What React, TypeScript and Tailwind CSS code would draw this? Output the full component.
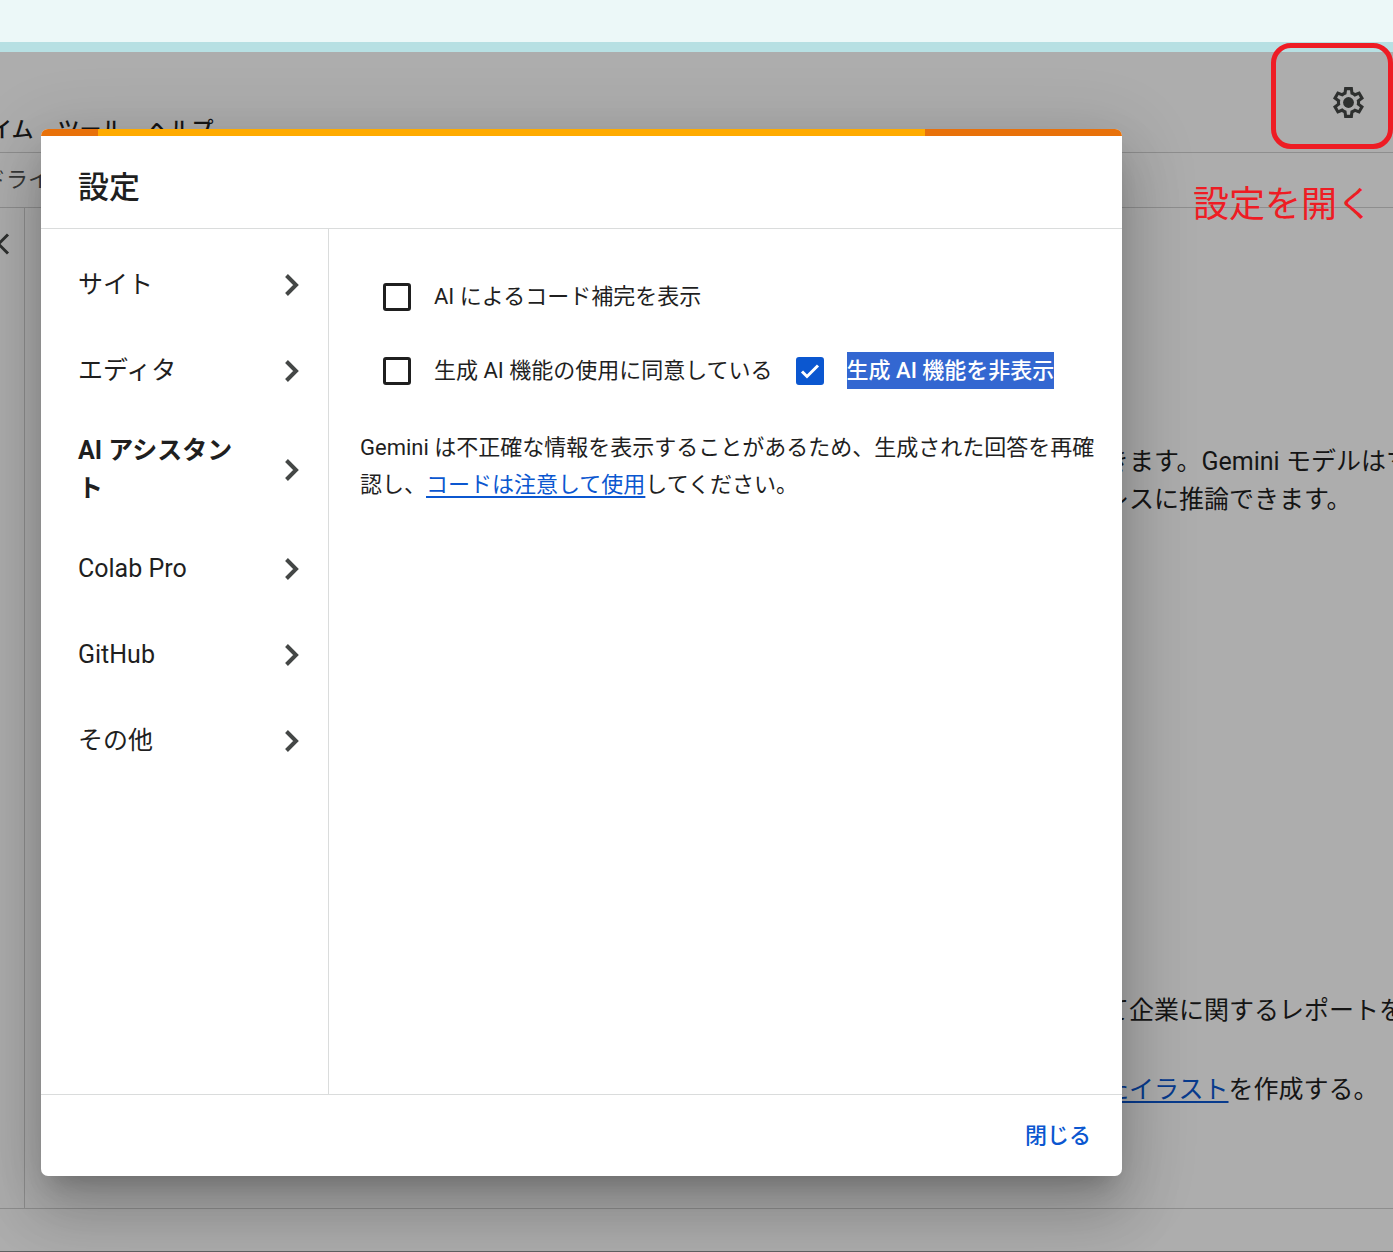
import { useState } from "react";

const navItems = ["サイト", "エディタ", "AI アシスタント", "Colab Pro", "GitHub", "その他"];

function GearIcon() {
  return (
    <svg viewBox="0 0 24 24" className="size-[37px] fill-[#2e302f]" aria-hidden="true">
      <path
        fillRule="evenodd"
        d="m9.25 22-.4-3.2q-.325-.125-.612-.3-.288-.175-.563-.375L4.7 19.375l-2.75-4.75 2.575-1.95Q4.5 12.5 4.5 12.338v-.675q0-.163.025-.338L1.95 9.375l2.75-4.75 2.975 1.25q.275-.2.575-.375.3-.175.6-.3l.4-3.2h5.5l.4 3.2q.325.125.613.3.287.175.562.375l2.975-1.25 2.75 4.75-2.575 1.95q.025.175.025.338v.674q0 .163-.05.338l2.575 1.95-2.75 4.75-2.95-1.25q-.275.2-.575.375-.3.175-.6.3l-.4 3.2ZM11 20h1.975l.35-2.65q.775-.2 1.438-.587.662-.388 1.212-.938l2.475 1.025.975-1.7-2.15-1.625q.125-.35.175-.738.05-.387.05-.787t-.05-.788q-.05-.387-.175-.737l2.15-1.625-.975-1.7-2.475 1.05q-.55-.575-1.212-.963-.663-.387-1.438-.587L13 4h-1.975l-.35 2.65q-.775.2-1.437.587-.663.388-1.213.938L5.55 7.15l-.975 1.7 2.15 1.6q-.125.375-.175.75-.05.375-.05.8 0 .4.05.775t.175.75l-2.15 1.625.975 1.7 2.475-1.05q.55.575 1.213.962.662.388 1.437.588Z"
      />
      <circle cx="12" cy="12" r="3.5" />
    </svg>
  );
}

function ChevronRight() {
  return (
    <svg viewBox="0 0 16 24" className="h-6 w-4 shrink-0 fill-none stroke-[#444746] stroke-[4]" aria-hidden="true">
      <path d="M1.5 2.5 11 12 1.5 21.5" />
    </svg>
  );
}

type CheckFieldProps = {
  id: string;
  label: string;
  initial?: boolean;
  selected?: boolean;
};

function CheckField({ id, label, initial = false, selected = false }: CheckFieldProps) {
  const [checked, setChecked] = useState(initial);

  return (
    <div className="flex items-center gap-[23px]">
      <span className="grid size-7 shrink-0 place-items-center">
        <input
          id={id}
          type="checkbox"
          checked={checked}
          onChange={(e) => setChecked(e.target.checked)}
          className="col-start-1 row-start-1 size-7 appearance-none rounded-[3px] border-3 border-[#1f1f1f] checked:border-[#0b57d0] checked:bg-[#0b57d0]"
        />
        {checked && (
          <svg
            viewBox="0 0 28 28"
            className="pointer-events-none col-start-1 row-start-1 size-7 fill-none stroke-white stroke-3"
            aria-hidden="true"
          >
            <path d="m6 14.5 5 5L22 8.5" />
          </svg>
        )}
      </span>
      <label
        htmlFor={id}
        className={selected ? "bg-[#3367d1] font-medium whitespace-nowrap text-white" : "whitespace-nowrap"}
      >
        {label}
      </label>
    </div>
  );
}

function Notebook() {
  return (
    <>
      <header className="flex h-[100px] items-end justify-between">
        <nav className="-ml-[10px] flex gap-6 pb-1 text-[22px] leading-[37px] font-medium text-[#151515]">
          <a href="#runtime">イム</a>
          <a href="#tools">ツール</a>
          <a href="#help">ヘルプ</a>
        </nav>
        <button type="button" aria-label="設定" className="mr-[26px] mb-[31px]">
          <GearIcon />
        </button>
      </header>
      <div className="flex h-[56px] items-center border-y border-[#8e8e8e] pb-0.5 text-[22px] text-[#363837]">
        <span className="-ml-4">ドライブ</span>
      </div>
      <div className="flex flex-1">
        <aside className="w-[25px] shrink-0 border-r border-[#8e8e8e] pt-6">
          <svg viewBox="0 0 12 24" className="h-6 w-3 fill-none stroke-[#2e302f] stroke-3" aria-hidden="true">
            <path d="M8 2.5-1.5 12 8 21.5" />
          </svg>
        </aside>
        <main className="ml-auto w-[289px] overflow-hidden pt-[235px] text-[25px] leading-[38px] whitespace-nowrap text-[#151515]">
          <p>
            きます。Gemini モデルはマ
            <br />
            レスに推論できます。
          </p>
          <p className="mt-[473px]">て企業に関するレポートを</p>
          <p className="mt-[41px]">
            <a href="#illustration" className="text-[#083b8d] underline decoration-2 underline-offset-3">
              たイラスト
            </a>
            を作成する。
          </p>
        </main>
      </div>
      <footer className="h-[44px] border-y border-t-[#8e8e8e] border-b-[#5f6162]" />
    </>
  );
}

function SettingsDialog() {
  const [active, setActive] = useState("AI アシスタント");

  return (
    <div
      role="dialog"
      aria-labelledby="settings-title"
      className="flex flex-1 flex-col overflow-hidden rounded-[7px] bg-white text-[#1f1f1f] shadow-[0_17px_23px_-11px_rgba(0,0,0,0.2),0_37px_58px_5px_rgba(0,0,0,0.14),0_14px_71px_12px_rgba(0,0,0,0.12)]"
    >
      <div className="grid h-[7px] grid-cols-[57fr_827fr_197fr] bg-[#e8710a]">
        <div className="col-start-2 bg-[#ffab00]" />
      </div>
      <h1
        id="settings-title"
        className="flex h-[93px] items-center border-b border-[#dadcdc] px-[37px] pt-3 text-[31px] leading-[38px] font-medium"
      >
        設定
      </h1>
      <div className="flex flex-1">
        <nav className="w-[288px] shrink-0 border-r border-[#dadcdc] pt-[13px]">
          {navItems.map((item) => (
            <button
              key={item}
              type="button"
              onClick={() => setActive(item)}
              className={`flex min-h-[86px] w-full items-center justify-between gap-10 py-[18px] pr-[27px] pl-[37px] text-left text-[25px] leading-[38px] ${
                item === active ? "font-bold" : ""
              }`}
            >
              <span>{item}</span>
              <ChevronRight />
            </button>
          ))}
        </nav>
        <section className="flex-1 pt-[49px] pr-6 pl-[31px] text-[22px] leading-[37px]">
          <div className="flex flex-col gap-[37px] pl-[23px]">
            <CheckField id="code-completion" label="AI によるコード補完を表示" />
            <div className="flex gap-[23px]">
              <CheckField id="ai-consent" label="生成 AI 機能の使用に同意している" />
              <CheckField id="hide-ai" label="生成 AI 機能を非表示" initial selected />
            </div>
          </div>
          <p className="mt-10">
            Gemini は不正確な情報を表示することがあるため、生成された回答を再確認し、
            <a href="#caution" className="text-[#0b57d0] underline decoration-2 underline-offset-4">
              コードは注意して使用
            </a>
            してください。
          </p>
        </section>
      </div>
      <div className="flex h-[82px] items-center justify-end border-t border-[#dadcdc] px-[31px]">
        <button type="button" className="text-[22px] leading-[37px] font-medium text-[#0b57d0]">
          閉じる
        </button>
      </div>
    </div>
  );
}

export default function App() {
  return (
    <div className="relative flex min-h-screen flex-col overflow-hidden bg-[#ecf8f8] font-[Roboto,'Noto_Sans_CJK_JP',sans-serif]">
      <div className="h-[52px] border-b-10 border-[#b7e0e3]" />
      <div className="relative flex flex-1 flex-col overflow-hidden bg-[#adadad]">
        <Notebook />
        <div className="absolute inset-0 flex pt-[77px] pr-[271px] pb-[76px] pl-[41px]">
          <SettingsDialog />
        </div>
      </div>
      {/* callout around the gear button */}
      <div className="pointer-events-none absolute top-[43px] right-0 h-[106px] w-[122px] rounded-[20px] border-5 border-[#ee1c24]" />
      <p className="absolute top-[181px] right-5 text-[36px] leading-[48px] text-[#ee1c24]">設定を開く</p>
    </div>
  );
}
